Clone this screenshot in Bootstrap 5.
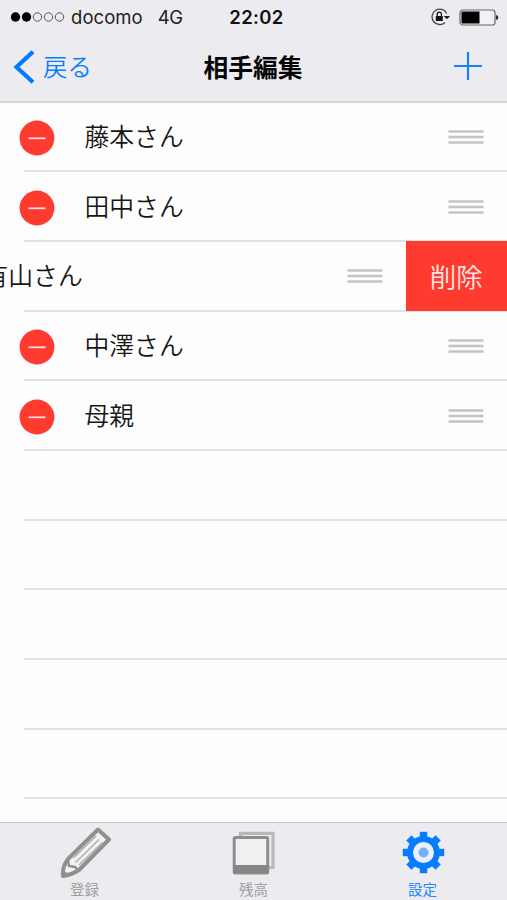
<!DOCTYPE html>
<html lang="ja">
<head>
<meta charset="utf-8">
<meta name="viewport" content="width=device-width, initial-scale=1">
<title>相手編集</title>
<link href="https://cdn.jsdelivr.net/npm/bootstrap@5.3.0/dist/css/bootstrap.min.css" rel="stylesheet">
<style>
body{font-family:"Noto Sans CJK JP",sans-serif;background:#fdfdfd;height:900px;color:#111;line-height:1}
svg{display:block;flex:none}
.top-area{height:103px;background:#ececf0;border-bottom:2px solid #d6d6da}
.status{height:34px;font-family:Inter,"Liberation Sans",sans-serif;font-size:18.5px;padding:0 8px 0 14px}
.side{flex:1 1 0}
.signal{margin-left:-4px}
.carrier{margin-left:5px;color:#222;letter-spacing:.05px}
.network{margin-left:15px;letter-spacing:-.5px;color:#222}
.clock{font-weight:600;font-size:18.5px;letter-spacing:.35px;color:#111}
.titlebar{height:67px;padding:0 24px 0 23px}
.back{color:#087dfb;font-size:24.4px;font-weight:350;text-decoration:none;margin-left:-10px}
.back span,.title{padding-bottom:1px}
.plus{margin-bottom:3px}
.title{font-size:24.8px;font-weight:700;color:#050505}
.rows{height:719px}
.person{height:69.7px;flex:none}
.person:first-child{height:69.3px}
.person::after{content:"";display:block;height:2px;margin-left:24px;background:#e1e1e4;flex:none}
.person-body{padding:1px 23px 0 19px}
.name{font-size:24.8px;font-weight:350;margin-left:29.5px;padding-bottom:3px;color:#161616;white-space:nowrap}
.minus{width:36px;height:36px;margin-top:2px}
.swiped{position:relative}
.swiped .person-body{margin-left:-101px;margin-right:101px}
.delete{position:absolute;right:0;top:-1px;width:101.5px;height:70px;background:#ff3a2f;color:#ffe9e6;font-size:26.5px;font-weight:350;border:0;border-radius:0}
.tabs{height:78px;background:#ececf0;border-top:1px solid #c5c5c8;font-size:14.5px;color:#a0a0a0}
.tab{color:inherit;text-decoration:none;width:169px;padding-top:3px}
.tab.current{color:#2588fa}
.tab svg{margin-bottom:3.5px}
</style>
<script src="https://cdn.jsdelivr.net/npm/bootstrap@5.3.0/dist/js/bootstrap.bundle.min.js"></script>
</head>
<body class="d-flex flex-column overflow-hidden">
<svg class="d-none">
<symbol id="remove" viewBox="0 0 36 36"><circle cx="18" cy="18.6" r="17.4" fill="#eee"/><circle cx="18" cy="18" r="17.4" fill="#ff3a2f"/><path d="M9.5 18.3h17" stroke="#ffdeda" stroke-width="1.8"/></symbol>
<symbol id="grip" viewBox="0 0 36 16"><path d="M.5 2.5h35M.5 8h35M.5 13.5h35" stroke="#c4c4c7" stroke-width="2.4"/></symbol>
</svg>
<header class="top-area flex-shrink-0">
<div class="status d-flex align-items-center">
<div class="side d-flex align-items-center">
<svg class="signal" width="56" height="12" viewBox="0 0 56 12"><g fill="#000"><circle cx="5.5" cy="6" r="4.7"/><circle cx="16.5" cy="6" r="4.7"/></g><g fill="none" stroke="#555" stroke-width="1"><circle cx="27.5" cy="6" r="4.2"/><circle cx="38.5" cy="6" r="4.2"/><circle cx="49.5" cy="6" r="4.2"/></g></svg>
<span class="carrier">docomo</span><span class="network">4G</span>
</div>
<span class="clock">22:02</span>
<div class="side d-flex align-items-center justify-content-end">
<svg width="20" height="18" viewBox="0 0 20 18"><path d="M15.7 5.500A7.700 7.700 0 1 0 14 14.500" fill="none" stroke="#444" stroke-width="1.300"/><path d="M12.500 8h6.700L15.900 11.300z" fill="#222"/><rect x="4.800" y="8" width="7" height="5" rx=".5" fill="#111"/><path d="M6.200 8V6.200a2.100 2.100 0 0 1 4.200 0V8" fill="none" stroke="#111" stroke-width="1.200"/></svg>
<svg class="ms-2" width="40" height="17" viewBox="0 0 40 17"><rect x="1" y="1" width="35" height="15" rx="2.8" fill="#f2f2f4" stroke="#666" stroke-width="1.2"/><path d="M3.6 2.5H20.500v12H3.6A1.1 1.1 0 0 1 2.5 13.4V3.6A1.1 1.1 0 0 1 3.6 2.5z" fill="#000"/><path d="M37 6q2.4.4 2.4 2.5T37 11z" fill="#333"/></svg>
</div>
</div>
<div class="titlebar d-flex align-items-center">
<div class="side"><a class="back d-inline-flex align-items-center" href="#"><svg width="22" height="34" viewBox="0 0 22 34"><path d="M20 1.8 3.5 17 20 32.2" fill="none" stroke="#007aff" stroke-width="4.2"/></svg><span class="ms-2">戻る</span></a></div>
<h1 class="title m-0">相手編集</h1>
<div class="side d-flex justify-content-end"><svg class="plus" width="30" height="30" viewBox="0 0 30 30"><path d="M1 15h28M15 1v28" stroke="#1480fa" stroke-width="2.2"/></svg></div>
</div>
</header>
<main class="rows d-flex flex-column flex-shrink-0 overflow-hidden">
<div class="person d-flex flex-column"><div class="person-body d-flex align-items-center flex-grow-1"><svg class="minus"><use href="#remove"/></svg><span class="name">藤本さん</span><svg class="ms-auto" width="36" height="16"><use href="#grip"/></svg></div></div>
<div class="person d-flex flex-column"><div class="person-body d-flex align-items-center flex-grow-1"><svg class="minus"><use href="#remove"/></svg><span class="name">田中さん</span><svg class="ms-auto" width="36" height="16"><use href="#grip"/></svg></div></div>
<div class="person swiped d-flex flex-column"><div class="person-body d-flex align-items-center flex-grow-1"><svg class="minus"><use href="#remove"/></svg><span class="name">有山さん</span><svg class="ms-auto" width="36" height="16"><use href="#grip"/></svg></div><button class="delete p-0">削除</button></div>
<div class="person d-flex flex-column"><div class="person-body d-flex align-items-center flex-grow-1"><svg class="minus"><use href="#remove"/></svg><span class="name">中澤さん</span><svg class="ms-auto" width="36" height="16"><use href="#grip"/></svg></div></div>
<div class="person d-flex flex-column"><div class="person-body d-flex align-items-center flex-grow-1"><svg class="minus"><use href="#remove"/></svg><span class="name">母親</span><svg class="ms-auto" width="36" height="16"><use href="#grip"/></svg></div></div>
<div class="person d-flex flex-column justify-content-end"></div>
<div class="person d-flex flex-column justify-content-end"></div>
<div class="person d-flex flex-column justify-content-end"></div>
<div class="person d-flex flex-column justify-content-end"></div>
<div class="person d-flex flex-column justify-content-end"></div>
</main>
<nav class="tabs d-flex flex-shrink-0">
<a class="tab d-flex flex-column align-items-center" href="#"><svg width="52" height="52" viewBox="0 0 52 52"><path d="M39 3.500 50 13.500 20 44Q12 49 4 50Q3 41 9 33z" fill="#f2f2f4" stroke="#909090" stroke-width="4" stroke-linejoin="round"/><path d="M9 34 10 40 16 41 19 44" fill="none" stroke="#909090" stroke-width="2.500"/><path d="M4 43q2 4 7 4.500l-8 2.500z" fill="#909090"/><path d="M14.500 32 37 10M16.500 36.500 40 13.500M20 39 43.500 16.500" fill="none" stroke="#b0b0b0" stroke-width="1.500"/></svg><span>登録</span></a>
<a class="tab d-flex flex-column align-items-center" href="#"><svg width="52" height="52" viewBox="0 0 52 52"><path d="M12.500 10V7.300H45V41.500H41" fill="none" stroke="#b8b8b8" stroke-width="3.200"/><rect x="6.200" y="11.500" width="33.500" height="35.500" rx="1" fill="#f0f0f2" stroke="#8e8e8e" stroke-width="3"/><path d="M5.500 39H40.500V47H5.500z" fill="#858585"/></svg><span>残高</span></a>
<a class="tab current d-flex flex-column align-items-center" href="#"><svg width="52" height="52" viewBox="0 0 52 52"><g transform="translate(26.500 26.500)"><g fill="#087cff"><circle r="16.500"/><g id="teeth"><rect x="-3.700" y="-20.700" width="7.400" height="41.400"/><rect x="-20.700" y="-3.700" width="41.400" height="7.400"/></g><use href="#teeth" transform="rotate(45)"/></g><circle r="10.500" fill="#e9f0f9"/><circle r="5" fill="#72b2f5"/></g></svg><span>設定</span></a>
</nav>
</body>
</html>
